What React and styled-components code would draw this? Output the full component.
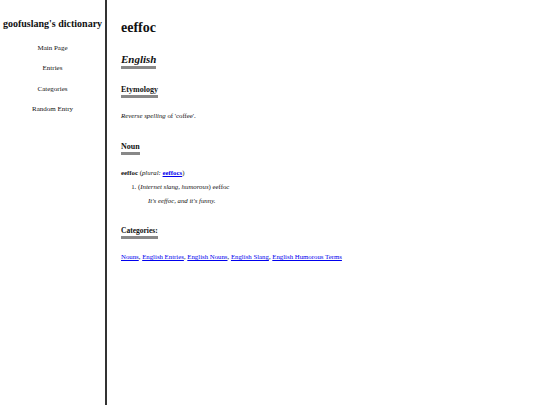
import styled, { createGlobalStyle } from "styled-components"

const GlobalStyle = createGlobalStyle`
    html, body {
        margin: 0;
        padding: 0;
        background: #fff;
    }
    body {
        font-family: "Liberation Serif", "Times New Roman", serif;
        color: #111;
    }
`

const categories = ["Nouns", "English Entries", "English Nouns", "English Slang", "English Humorous Terms"]

function App(){
    return (
        <PageStyled>
            <GlobalStyle/>
            <Sidebar>
                <SiteTitle>goofuslang's dictionary</SiteTitle>
                <Nav>
                    <NavLink>Main Page</NavLink>
                    <NavLink>Entries</NavLink>
                    <NavLink>Categories</NavLink>
                    <NavLink>Random Entry</NavLink>
                </Nav>
            </Sidebar>
            <Main>
                <h1>eeffoc</h1>
                <Heading $size="11px" $italic $gap="17px">English</Heading>
                <Heading $size="8px" $gap="16px">Etymology</Heading>
                <p className="etym"><i>Reverse spelling</i> of 'coffee'.</p>
                <Heading $size="8px" $gap="23px">Noun</Heading>
                <p className="headword"><b>eeffoc</b> (<i>plural:</i> <a href="#"><b>eeffocs</b></a>)</p>
                <ol>
                    <li>
                        (<i>Internet slang, humorous</i>) eeffoc
                        <p className="quote"><i>It's eeffoc, and it's funny.</i></p>
                    </li>
                </ol>
                <Heading $size="7.5px" $gap="22px">Categories:</Heading>
                <p className="cats">
                    {categories.map((c, i) => (
                        <span key={c}>
                            <a href="#">{c}</a>{i < categories.length - 1 ? ", " : ""}
                        </span>
                    ))}
                </p>
            </Main>
        </PageStyled>
    )
}

const PageStyled = styled.div`
    display: flex;
    min-height: 405px;
`

const Sidebar = styled.div`
    width: 105px;
    flex-shrink: 0;
    border-right: 2px solid #333;
    text-align: center;
    padding-top: 18px;
`

const SiteTitle = styled.div`
    font-size: 10px;
    font-weight: bold;
    white-space: nowrap;
`

const Nav = styled.div`
    display: flex;
    flex-direction: column;
    gap: 11.3px;
    margin-top: 15px;
`

const NavLink = styled.div`
    font-size: 7px;
    line-height: 9px;
`

const Heading = styled.div`
    display: inline-block;
    align-self: flex-start;
    font-size: ${p => p.$size};
    font-weight: bold;
    font-style: ${p => p.$italic ? "italic" : "normal"};
    border-bottom: 3px solid #888;
    padding-bottom: 1px;
    margin-top: ${p => p.$gap};
`

const Main = styled.div`
    flex: 1;
    padding: 20px 0 0 14px;
    display: flex;
    flex-direction: column;
    font-size: 6.8px;
    h1{
        font-size: 14px;
        margin: 0;
        line-height: 16px;
    }
    p{
        margin: 0;
    }
    a{
        color: #0000ee;
        text-decoration: underline;
    }
    .etym{
        margin-top: 14px;
    }
    .headword{
        margin-top: 14px;
    }
    ol{
        margin: 7px 0 0 0;
        padding-left: 17px;
    }
    .quote{
        margin: 7px 0 0 10px;
    }
    .cats{
        margin-top: 14px;
    }
`

export default App
